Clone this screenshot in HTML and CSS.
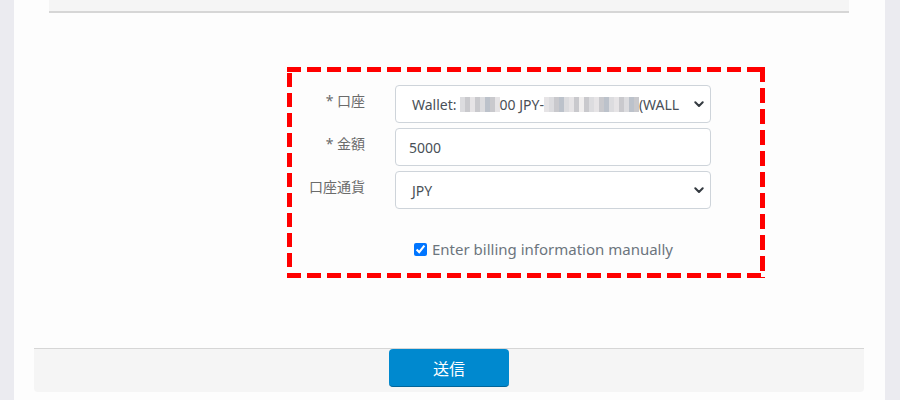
FILE: index.html
```html
<!DOCTYPE html>
<html lang="ja">
<head>
<meta charset="utf-8">
<title>Form</title>
<link rel="stylesheet" href="styles.css">
</head>
<body>
<div class="panel">
  <div class="topbar"></div>
  <div class="formbox">
    <div class="row">
      <label class="lbl">* 口座</label>
      <div class="fake-select">
        <span class="val">Wallet: <span class="mosaic m1"><i class="a"></i><i class="b"></i><i class="c"></i><i class="b"></i><i class="a"></i><i class="d"></i><i class="b"></i><i class="c"></i></span>00 JPY-<span class="mosaic m2"><i class="c"></i><i class="a"></i><i class="b"></i><i class="d"></i><i class="a"></i><i class="c"></i><i class="b"></i><i class="e"></i><i class="b"></i><i class="a"></i><i class="c"></i><i class="b"></i><i class="d"></i><i class="a"></i><i class="c"></i><i class="b"></i><i class="a"></i><i class="d"></i><i class="b"></i></span>(WALL</span>
        <svg class="chev" width="10" height="7" viewBox="0 0 10 7"><path d="M1.3 1.3l3.7 3.7 3.7-3.7" fill="none" stroke="#343a40" stroke-width="2" stroke-linecap="round" stroke-linejoin="round"/></svg>
      </div>
    </div>
    <div class="row">
      <label class="lbl">* 金額</label>
      <div class="input"><span class="num">5000</span></div>
    </div>
    <div class="row">
      <label class="lbl">口座通貨</label>
      <div class="fake-select">
        <span class="val">JPY</span>
        <svg class="chev" width="10" height="7" viewBox="0 0 10 7"><path d="M1.3 1.3l3.7 3.7 3.7-3.7" fill="none" stroke="#343a40" stroke-width="2" stroke-linecap="round" stroke-linejoin="round"/></svg>
      </div>
    </div>
    <div class="check-row">
      <label class="check"><input type="checkbox" checked> <span>Enter billing information manually</span></label>
    </div>
  </div>
  <div class="footer">
    <button class="submit" type="button">送信</button>
  </div>
</div>
</body>
</html>
```
FILE: styles.css
```css
html, body {
  margin: 0;
  padding: 0;
  background: #ebebf0;
  font-family: "Noto Sans", "Noto Sans CJK JP", sans-serif;
}
.panel {
  margin-left: 14px;
  width: 871px;
  height: 400px;
  background: #fdfdfd;
  overflow: hidden;
}
.topbar {
  margin: 0 36px 0 35px;
  height: 11px;
  background: #f5f5f5;
  border-bottom: 2px solid #d6d6d6;
}
.formbox {
  margin: 54px 0 0 273px;
  width: 468px;
  border: 5px solid transparent;
  padding: 13px 0 13px 0;
  box-sizing: content-box;
  background:
    repeating-linear-gradient(90deg, #ff0000 0 14px, transparent 14px 20px) left top / 100% 5px no-repeat,
    repeating-linear-gradient(90deg, #ff0000 0 14px, transparent 14px 20px) left bottom / 100% 5px no-repeat,
    repeating-linear-gradient(180deg, transparent 0 6px, #ff0000 6px 20px) left top / 5px 100% no-repeat,
    repeating-linear-gradient(180deg, #ff0000 0 15px, transparent 15px 21px) right top / 5px 100% no-repeat;
  background-origin: border-box;
  background-clip: border-box;
}
.row {
  display: flex;
  align-items: flex-start;
  margin-bottom: 5px;
}
.row:last-of-type { margin-bottom: 0; }
.lbl {
  width: 73px;
  padding-right: 30px;
  text-align: right;
  font-size: 14px;
  line-height: 21px;
  padding-top: 5px;
  color: #6b6b6b;
}
.fake-select, .input {
  width: 316px;
  height: 38px;
  box-sizing: border-box;
  border: 1px solid #ced4da;
  border-radius: 4px;
  background: #fff;
  display: flex;
  align-items: center;
  font-size: 14px;
  color: #495057;
  position: relative;
}
.fake-select .val {
  padding-left: 16px;
  white-space: nowrap;
  display: flex;
  align-items: center;
}
.input .num { padding-left: 13px; }
.chev {
  position: absolute;
  right: 6px;
  top: 15px;
}
.mosaic {
  display: inline-flex;
  height: 15px;
  margin-top: 1px;
}
.mosaic i {
  display: block;
  width: 5px;
  height: 15px;
}
.mosaic i.a { background: #dcdcdf; }
.mosaic i.b { background: #c9c9cd; }
.mosaic i.c { background: #e6e4e6; }
.mosaic i.d { background: #bcc2cb; }
.mosaic i.e { background: #f0eeee; }
.m1 { margin-left: 3px; }
.check-row {
  margin-top: 29px;
  padding-left: 122px;
  height: 22px;
  display: flex;
  align-items: center;
}
.check {
  display: flex;
  align-items: center;
  font-size: 15px;
  color: #6c757d;
}
.check input {
  margin: 0 5px 0 0;
  width: 13px;
  height: 13px;
}
.footer {
  margin: 70px 0 0 20px;
  width: 830px;
  height: 43px;
  background: #f5f5f5;
  border-top: 1px solid #d6d6d6;
  border-radius: 0 0 4px 4px;
  display: flex;
  justify-content: center;
}
.submit {
  width: 120px;
  height: 38px;
  border: 0;
  border-bottom: 1px solid #00659a;
  border-radius: 4px;
  background: #0089cf;
  color: #fff;
  font-size: 16px;
  font-family: "Noto Sans CJK JP", sans-serif;
  padding: 0;
}
```
